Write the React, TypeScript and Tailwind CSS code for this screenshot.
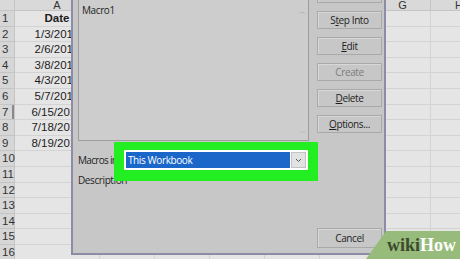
import React from 'react';

const rows = [
  { n: 1, v: 'Date', bold: true },
  { n: 2, v: '1/3/2017' },
  { n: 3, v: '2/6/2017' },
  { n: 4, v: '3/8/2017' },
  { n: 5, v: '4/3/2017' },
  { n: 6, v: '5/7/2017' },
  { n: 7, v: '6/15/2017' },
  { n: 8, v: '7/18/2017' },
  { n: 9, v: '8/19/2017' },
  { n: 10, v: '' },
  { n: 11, v: '' },
  { n: 12, v: '' },
  { n: 13, v: '' },
  { n: 14, v: '' },
  { n: 15, v: '' },
  { n: 16, v: '' },
];

const cols = ['B', 'C', 'D', 'E', 'F'];

const DialogButton: React.FC<{ label: React.ReactNode; disabled?: boolean; className?: string }> = ({
  label,
  disabled,
  className = '',
}) => (
  <div
    className={`h-[18px] w-[65px] flex items-center justify-center border border-[#a9a9a9] bg-[#c7c7c7] shadow-[inset_1px_1px_0_#d8d8d8] text-[10px] tracking-[-0.4px] ${
      disabled ? 'text-[#7c7c7c]' : 'text-[#1e1e1e]'
    } ${className}`}
  >
    {label}
  </div>
);

export default function App() {
  return (
    <div className="relative w-[460px] h-[259px] overflow-hidden bg-[#e5e5e5] font-['Liberation_Sans',sans-serif]">
      {/* Spreadsheet */}
      <div className="flex flex-col">
        <div className="flex h-[11px] bg-[#d9d9d9] border-b border-[#c4c4c4] text-[11px] leading-[11px] text-[#333]">
          <div className="w-[15px] shrink-0 border-r border-[#c4c4c4]" />
          <div className="w-[85px] shrink-0 border-r border-[#c4c4c4] text-center">A</div>
          {cols.map((c) => (
            <div key={c} className="w-[55px] shrink-0 border-r border-[#c4c4c4] text-center">
              {c}
            </div>
          ))}
          <div className="w-[56px] shrink-0 border-r border-[#c4c4c4] text-center">G</div>
          <div className="w-[56px] shrink-0 text-center">H</div>
        </div>
        {rows.map((r) => (
          <div key={r.n} className="flex h-[15.6px] text-[11.5px] leading-[15px] text-[#1c1c1c]">
            <div
              className={`w-[15px] shrink-0 bg-[#d6d6d6] border-r border-b border-[#c4c4c4] pl-[2px] text-[#333] ${
                r.n === 7 ? 'shadow-[inset_-2px_0_0_#8a8a8a]' : ''
              }`}
            >
              {r.n}
            </div>
            <div className={`w-[85px] shrink-0 border-r border-b border-[#d3d3d3] text-center ${r.bold ? 'font-bold' : ''}`}>
              {r.v}
            </div>
            {cols.map((c) => (
              <div key={c} className="w-[55px] shrink-0 border-r border-b border-[#d3d3d3]" />
            ))}
            <div className="w-[56px] shrink-0 border-r border-b border-[#d3d3d3]" />
            <div className="w-[56px] shrink-0 border-b border-[#d3d3d3]" />
          </div>
        ))}
      </div>

      {/* Macro dialog */}
      <div className="absolute left-[71px] top-[-30px] w-[315px] h-[285px] bg-[#c7c7c7] border-x-2 border-b-2 border-[#8c8ca6] font-['Open_Sans',sans-serif] text-[10px] tracking-[-0.4px] text-[#1e1e1e]">
        <div className="flex pl-[5px] pt-[8px] gap-[8px]">
          <div className="w-[231px] flex flex-col">
            {/* list */}
            <div className="h-[163px] border border-[#9d9d9d] bg-[#cdcdcd] flex">
              <div className="flex-1 pl-[3px] pt-[24px] leading-[14px]">Macro1</div>
              <div className="w-[12px] flex flex-col justify-between items-center py-[2px] text-[7px] text-[#9a9a9a]">
                <span className="mt-[26px]">︿</span>
                <span>﹀</span>
              </div>
            </div>
            {/* macros in */}
            <div className="flex items-center mt-[9px] h-[20px]">
              <span className="w-[46px] whitespace-nowrap tracking-[-0.7px]">Macros in</span>
              <div className="relative w-[184px] h-[20px]">
                <div className="absolute -left-[10px] -right-[10px] -top-[8px] -bottom-[11px] bg-[#22ee22]" />
                <div className="relative h-full bg-white p-[2px] flex">
                  <div className="flex-1 bg-[#1a66c9] text-white leading-[16px] pl-[2px]">This Workbook</div>
                  <div className="w-[15px] ml-[1px] bg-[#e2e2e2] border border-[#c3c3c3] flex items-center justify-center">
                    <svg width="7" height="5" viewBox="0 0 7 5">
                      <path d="M1 1 L3.5 3.5 L6 1" fill="none" stroke="#555" strokeWidth="1" />
                    </svg>
                  </div>
                </div>
              </div>
            </div>
            <div className="mt-[3px] leading-[14px]">Description</div>
          </div>

          {/* buttons */}
          <div className="flex flex-col pt-[7px]">
            <div className="flex flex-col gap-[8px]">
              <DialogButton label={<span className="invisible">Run</span>} />
              <DialogButton label={<span>S<u>t</u>ep Into</span>} />
              <DialogButton label={<span><u>E</u>dit</span>} />
              <DialogButton label="Create" disabled />
              <DialogButton label={<span><u>D</u>elete</span>} />
              <DialogButton label={<span><u>O</u>ptions...</span>} />
            </div>
            <DialogButton label="Cancel" className="mt-[95px] h-[20px]" />
          </div>
        </div>
      </div>

      {/* wikiHow mark */}
      <div className="absolute right-0 bottom-0 w-[94px] h-[28px] bg-[#97bb7a] [clip-path:polygon(20px_0,100%_0,100%_100%,0_100%)] flex items-center justify-end pr-[4px] font-['Liberation_Serif',serif] font-bold text-[18px] leading-none">
        <span className="text-[#3b4a2e]">wiki</span>
        <span className="text-white">How</span>
      </div>
    </div>
  );
}
